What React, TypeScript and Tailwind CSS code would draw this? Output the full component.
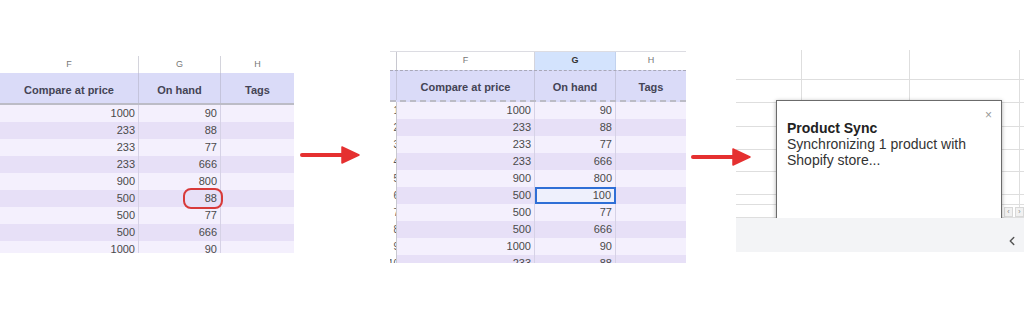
import { ChevronLeft } from 'lucide-react'

const FONT = { fontFamily: '"Liberation Sans", Arial, sans-serif' }

const rows1: [string, string][] = [
  ['1000', '90'], ['233', '88'], ['233', '77'], ['233', '666'], ['900', '800'],
  ['500', '88'], ['500', '77'], ['500', '666'], ['1000', '90'],
]

const rows2: [string, string][] = [
  ['1000', '90'], ['233', '88'], ['233', '77'], ['233', '666'], ['900', '800'],
  ['500', '100'], ['500', '77'], ['500', '666'], ['1000', '90'], ['233', '88'],
]

function Arrow() {
  return (
    <svg width="58" height="20" viewBox="0 0 58 20" className="shrink-0 overflow-visible">
      <line x1="0" y1="10" x2="42" y2="10" stroke="#e53030" strokeWidth="4" strokeLinecap="round" />
      <path d="M40 2 L57 10 L40 18 Z" fill="#e53030" stroke="#e53030" strokeWidth="1.5" strokeLinejoin="round" />
    </svg>
  )
}

function SheetOne() {
  return (
    <div className="w-[294px] h-[197px] mt-[56px] shrink-0 overflow-hidden text-[#4a4a4a]" style={FONT}>
      {/* column letters */}
      <div className="flex h-[17px] bg-white text-[9px] text-[#777]">
        <div className="w-[139px] flex items-center justify-center border-r border-[#d4d4dc]">F</div>
        <div className="w-[82px] flex items-center justify-center border-r border-[#d4d4dc]">G</div>
        <div className="w-[73px] flex items-center justify-center">H</div>
      </div>
      {/* header */}
      <div className="flex h-[32px] bg-[#dadbf8] border-b-2 border-[#bcbcc6] text-[11px] font-bold text-[#444455]">
        <div className="w-[139px] flex items-end justify-center pb-[5px] border-r border-[#c4c4dc]">Compare at price</div>
        <div className="w-[82px] flex items-end justify-center pb-[5px] border-r border-[#c4c4dc]">On hand</div>
        <div className="w-[73px] flex items-end justify-center pb-[5px]">Tags</div>
      </div>
      {rows1.map(([a, b], i) => (
        <div key={i} className={`flex h-[17px] text-[11px] ${i % 2 === 0 ? 'bg-[#f4f0fd]' : 'bg-[#e7e0f7]'}`}>
          <div className="w-[139px] flex items-center justify-end pr-[3px] border-r border-[#d6d2e6]">{a}</div>
          <div className="w-[82px] relative flex items-center justify-end pr-[3px] border-r border-[#d6d2e6]">
            {b}
            {i === 5 && (
              <div className="absolute left-[44px] top-[-2px] w-[40px] h-[21px] rounded-[8px] border-2 border-[#d83a3a]" />
            )}
          </div>
          <div className="w-[73px]" />
        </div>
      ))}
    </div>
  )
}

function SheetTwo() {
  return (
    <div className="w-[296px] h-[212px] mt-[51px] shrink-0 overflow-hidden text-[#4a4a4a]" style={FONT}>
      <div className="flex h-[19px] bg-white text-[9px] text-[#777] border-t border-[#dcdce2]">
        <div className="w-[7px] border-r border-[#c8c8d0]" />
        <div className="w-[138px] flex items-center justify-center border-r border-[#d4d4dc]">F</div>
        <div className="w-[81px] flex items-center justify-center bg-[#d3e3fd] text-[#333] font-bold border-r border-[#c2d2ee]">G</div>
        <div className="w-[70px] flex items-center justify-center">H</div>
      </div>
      <div className="flex h-[32px] bg-[#dadbf8] border-t border-dashed border-[#a8a8b8] border-b-2 border-b-[#bcbcc6] text-[11px] font-bold text-[#444455]">
        <div className="w-[7px] border-r border-[#c4c4dc]" />
        <div className="w-[138px] flex items-end justify-center pb-[5px] border-r border-[#c4c4dc]">Compare at price</div>
        <div className="w-[81px] flex items-end justify-center pb-[5px] border-r border-[#c4c4dc]">On hand</div>
        <div className="w-[70px] flex items-end justify-center pb-[5px]">Tags</div>
      </div>
      {rows2.map(([a, b], i) => (
        <div key={i} className={`flex h-[17px] text-[11px] ${i % 2 === 0 ? 'bg-[#f4f0fd]' : 'bg-[#e7e0f7]'}`}>
          <div className="w-[7px] overflow-hidden flex items-center justify-end bg-white border-r border-[#c8c8d0] text-[10px] text-[#555]">
            <span className="translate-x-[3px]">{i + 1}</span>
          </div>
          <div className="w-[138px] flex items-center justify-end pr-[3px] border-r border-[#d6d2e6]">{a}</div>
          <div className={`w-[81px] flex items-center justify-end pr-[3px] ${i === 5 ? 'border-2 border-[#2f6fd6] bg-[#eef0fc]' : 'border-r border-[#d6d2e6]'}`}>{b}</div>
          <div className="w-[70px]" />
        </div>
      ))}
    </div>
  )
}

const gridRows = [30, 23, 24, 23, 22, 23, 10, 13]

function SyncPanel() {
  return (
    <div className="w-[288px] mt-[50px] shrink-0 bg-white" style={FONT}>
      <div className="relative h-[168px]">
        {gridRows.map((h, i) => (
          <div key={i} className="flex border-b border-[#dedede]" style={{ height: h }}>
            <div className="w-[66px] border-r border-[#dedede]" />
            <div className="w-[108px] border-r border-[#dedede]" />
            <div className="w-[110px] border-r border-[#dedede]" />
            <div className="flex-1" />
          </div>
        ))}
        {/* scroll arrows */}
        <div className="absolute right-0 top-[157px] flex gap-[2px]">
          <div className="w-[9px] h-[10px] bg-[#f1f1f1] border border-[#d8d8d8] text-[7px] leading-[8px] text-[#888] text-center">‹</div>
          <div className="w-[9px] h-[10px] bg-[#f1f1f1] border border-[#d8d8d8] text-[7px] leading-[8px] text-[#888] text-center">›</div>
        </div>
        {/* dialog */}
        <div className="absolute left-[40px] top-[50px] w-[226px] h-[124px] bg-white border border-[#6b6b6b] shadow-[0_1px_4px_rgba(0,0,0,0.35)] pl-[10px] pt-[19px]">
          <span className="absolute right-[9px] top-[8px] text-[12px] leading-none text-[#999]">×</span>
          <div className="text-[14px] leading-[16px] font-bold text-[#222]">Product Sync</div>
          <div className="text-[14px] leading-[16px] text-[#333]">Synchronizing 1 product with</div>
          <div className="text-[14px] leading-[16px] text-[#333]">Shopify store...</div>
        </div>
      </div>
      <div className="relative z-10 h-[34px] bg-[#f3f4f6] flex items-end justify-end pb-[4px] pr-[5px]">
        <ChevronLeft size={14} strokeWidth={2.5} className="text-[#555]" />
      </div>
    </div>
  )
}

export default function App() {
  return (
    <div className="w-[1024px] h-[335px] bg-white flex items-start overflow-hidden">
      <SheetOne />
      <div className="w-[96px] shrink-0 mt-[145px] pl-[8px] flex relative z-10">
        <Arrow />
      </div>
      <SheetTwo />
      <div className="w-[50px] shrink-0 mt-[147px] pl-[7px] flex relative z-10">
        <Arrow />
      </div>
      <SyncPanel />
    </div>
  )
}
